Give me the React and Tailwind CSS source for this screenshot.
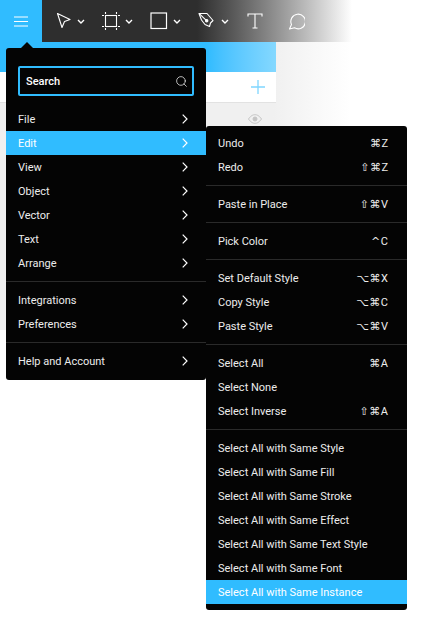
import { Search } from "lucide-react";

const mainGroups = [
  ["File", "Edit", "View", "Object", "Vector", "Text", "Arrange"],
  ["Integrations", "Preferences"],
  ["Help and Account"],
];

const editGroups = [
  [["Undo", "⌘", "Z"], ["Redo", "⇧⌘", "Z"]],
  [["Paste in Place", "⇧⌘", "V"]],
  [["Pick Color", "^", "C"]],
  [["Set Default Style", "⌥⌘", "X"], ["Copy Style", "⌥⌘", "C"], ["Paste Style", "⌥⌘", "V"]],
  [["Select All", "⌘", "A"], ["Select None", "", ""], ["Select Inverse", "⇧⌘", "A"]],
  [
    ["Select All with Same Style", "", ""],
    ["Select All with Same Fill", "", ""],
    ["Select All with Same Stroke", "", ""],
    ["Select All with Same Effect", "", ""],
    ["Select All with Same Text Style", "", ""],
    ["Select All with Same Font", "", ""],
    ["Select All with Same Instance", "", ""],
  ],
];

function Caret() {
  return (
    <svg width="8" height="5" viewBox="0 0 8 5" fill="none" stroke="#fff" strokeWidth="1.4">
      <path d="M1 1l3 3 3-3" />
    </svg>
  );
}

function Tool({ children, caret = true, className }) {
  return (
    <div className={`flex items-center ${className}`}>
      <svg width="18" height="18" viewBox="0 0 18 18" fill="none" stroke="#fff" strokeWidth="1.1">
        {children}
      </svg>
      {caret && (
        <span className="ml-[5px] flex">
          <Caret />
        </span>
      )}
    </div>
  );
}

function MenuRow({ label, active, children }) {
  return (
    <div className={`flex h-6 items-center justify-between pl-3 text-[11px] text-[#ececec] ${active ? "bg-[#30bcff] text-white" : ""}`}>
      <span className="pt-[2px]">{label}</span>
      {children}
    </div>
  );
}

export default function App() {
  return (
    <div className="relative h-[630px] w-[427px] overflow-hidden bg-white font-['Roboto','DejaVu_Sans',sans-serif]">
      {/* top toolbar */}
      <div className="flex h-[42px]">
        <div className="flex w-[42px] items-center justify-center bg-[#30bcff]">
          <svg width="14" height="13" viewBox="0 0 14 13" stroke="#fff" strokeWidth="1">
            <path d="M0 2h14M0 6.500h14M0 11h14" />
          </svg>
        </div>
        <div className="flex w-[310px] items-center bg-gradient-to-r from-[#2e2e2e] from-[50%] to-white to-[100%] pl-[12px]">
          <Tool className="w-[48px]">
            <path d="M3.500 1.500 16 7.500 10.500 9.500 8 15.500Z" strokeLinejoin="round" />
          </Tool>
          <Tool className="w-[48px]">
            <rect x="3.500" y="3.500" width="11" height="11" />
            <path d="M3.500 0v2M3.500 16v2M14.500 0v2M14.500 16v2M0 3.500h2M16 3.500h2M0 14.500h2M16 14.500h2" />
          </Tool>
          <Tool className="w-[48px]">
            <rect x="1" y="1" width="15.500" height="15.500" strokeWidth="1.2" />
          </Tool>
          <Tool className="w-[48px]">
            <path d="M1 1.500 9 1.500 15 8.500 12.500 11 11.500 14.500 7 12.500 3.500 8Z" strokeLinejoin="round" />
            <path d="M1.500 1.800 8 8.200" />
            <circle cx="8.700" cy="8.800" r="1.200" fill="#fff" />
          </Tool>
          <Tool caret={false} className="w-[41px]">
            <path d="M2 4.500V2h14v2.500M9 2v14M6.500 16h5" />
          </Tool>
          <Tool caret={false} className="w-[24px]">
            <path d="M2.500 17 4.500 12.500A7.300 7.300 0 1 1 7.500 15.800Z" strokeLinejoin="round" />
          </Tool>
        </div>
      </div>

      {/* layers panel behind the menus */}
      <div className="flex h-[288px] bg-gradient-to-r from-[#f0f0f0] from-[64%] to-white to-[82%]">
        <div className="w-[276px]">
          <div className="h-[30px] bg-gradient-to-r from-[#30bcff] from-[75%] to-[#84d8ff]" />
          <div className="flex h-[31px] items-center justify-end border-b border-[#e2e2e2] bg-white pr-[11px]">
            <svg width="14" height="14" viewBox="0 0 14 14" stroke="#7fd6ff" strokeWidth="1.300">
              <path d="M7 0v14M0 7h14" />
            </svg>
          </div>
          <div className="flex h-[32px] items-center justify-end pr-[14px]">
            <svg width="14" height="10" viewBox="0 0 14 10" fill="none" stroke="#c4c4c4" strokeWidth="1">
              <path d="M.5 5C3 1.500 5 .7 7 .7S11 1.500 13.500 5C11 8.500 9 9.300 7 9.300S3 8.500 .5 5Z" />
              <circle cx="7" cy="5" r="2" fill="#c4c4c4" />
            </svg>
          </div>
        </div>
      </div>

      {/* main menu */}
      <div className="absolute left-[6px] top-[48px] w-[200px] rounded-[3px] bg-[#040404] pb-[7px] pt-[18px]">
        <div className="absolute left-[15px] top-[-6px] size-0 border-x-[6px] border-b-[6px] border-x-transparent border-b-[#040404]" />
        <div className="mx-3 mb-[11px] flex h-[30px] items-center justify-between rounded-[2px] border-2 border-[#30bcff] pl-[6px] pr-[4px] text-[11px] font-medium text-white">
          <span className="pt-[2px]">Search</span>
          <Search size={13} strokeWidth={1.3} />
        </div>
        {mainGroups.map((group, i) => (
          <div key={i} className={i > 0 ? "mt-[6px] border-t border-[#2a2a2a] pt-[6px]" : ""}>
            {group.map((label) => (
              <MenuRow key={label} label={label} active={label === "Edit"}>
                <svg width="6" height="10" viewBox="0 0 6 10" fill="none" stroke="#fff" strokeWidth="1.200" className="mr-[18px]">
                  <path d="M.7.7 5 5 .7 9.300" />
                </svg>
              </MenuRow>
            ))}
          </div>
        ))}
      </div>

      {/* edit submenu */}
      <div className="absolute left-[206px] top-[126px] w-[201px] rounded-[3px] bg-[#040404] pb-[6px] pt-[5px]">
        {editGroups.map((group, i) => (
          <div key={i} className={i > 0 ? "mt-[6px] border-t border-[#2a2a2a] pt-[6px]" : ""}>
            {group.map(([label, symbols, key]) => (
              <MenuRow key={label} label={label} active={label === "Select All with Same Instance"}>
                <span className="mr-[19px] pt-[2px]">
                  <span className="font-['DejaVu_Sans'] text-[11px] tracking-[0.5px]">{symbols}</span>
                  {key}
                </span>
              </MenuRow>
            ))}
          </div>
        ))}
      </div>
    </div>
  );
}
